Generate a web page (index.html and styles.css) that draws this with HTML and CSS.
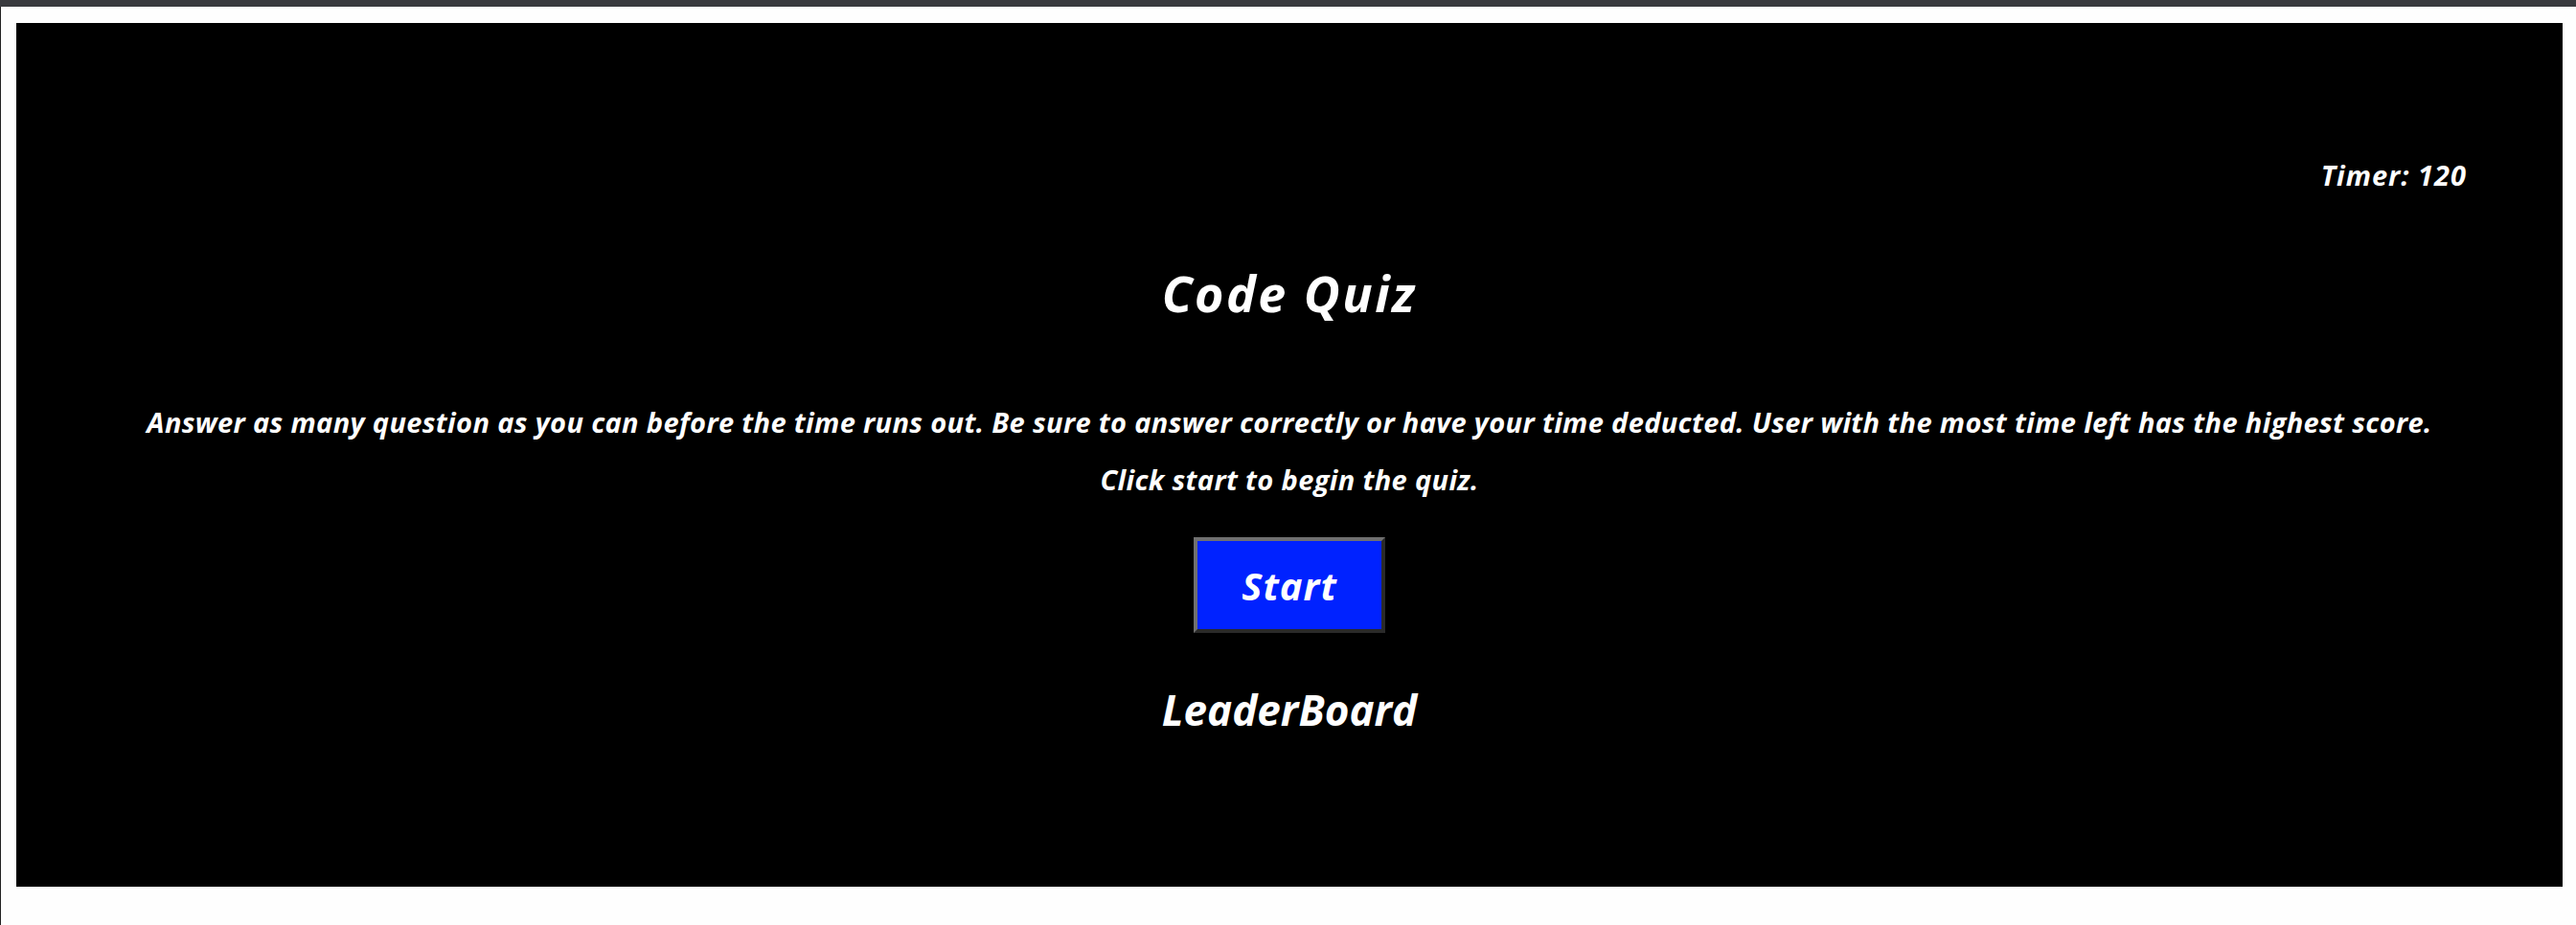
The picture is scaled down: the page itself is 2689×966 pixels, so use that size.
FILE: index.html
```html
<!DOCTYPE html>
<html lang="en">
<head>
<meta charset="utf-8">
<title>Code Quiz</title>
<link rel="stylesheet" href="styles.css">
</head>
<body>
<div class="chrome-bar"></div>
<div class="frame">
  <main class="quiz">
    <div class="timer-row"><span class="timer">Timer: 120</span></div>
    <h1 class="title">Code Quiz</h1>
    <p class="intro">Answer as many question as you can before the time runs out. Be sure to answer correctly or have your time deducted. User with the most time left has the highest score.<br>Click start to begin the quiz.</p>
    <button class="start-btn" type="button">Start</button>
    <h2 class="leaderboard">LeaderBoard</h2>
  </main>
</div>
</body>
</html>
```

FILE: styles.css
```css
html, body {
  margin: 0;
  padding: 0;
  background: #fefefe;
}

body {
  width: 2689px;
  height: 966px;
  overflow: hidden;
  font-family: "Open Sans", "DejaVu Sans", sans-serif;
  font-weight: 700;
  font-style: italic;
  color: #ffffff;
}

.chrome-bar {
  height: 7px;
  background: #393a3e;
}

.frame {
  height: 959px;
  box-sizing: border-box;
  border-left: 1px solid #222222;
  padding: 17px 14px 40px 16px;
  display: flex;
}

.quiz {
  flex: 1;
  background: #000000;
  display: flex;
  flex-direction: column;
  align-items: center;
}

.timer-row {
  align-self: stretch;
  display: flex;
  justify-content: flex-end;
  padding: 139px 100px 0 0;
}

.timer {
  font-size: 29px;
  line-height: 40px;
  letter-spacing: 1px;
}

.title {
  margin: 73px 0 0;
  font-size: 52px;
  line-height: 60px;
  font-weight: 700;
  letter-spacing: 2.5px;
}

.intro {
  margin: 75px 0 0;
  font-size: 29px;
  line-height: 60px;
  letter-spacing: 0.35px;
  text-align: center;
}

.start-btn {
  margin-top: 30px;
  width: 200px;
  height: 100px;
  box-sizing: border-box;
  background: #0022ff;
  border-style: solid;
  border-width: 4px;
  border-color: #707070 #2a2a2a #2a2a2a #707070;
  color: #ffffff;
  font-family: inherit;
  font-weight: 700;
  font-style: italic;
  font-size: 40px;
  letter-spacing: 1px;
  padding: 0;
}

.leaderboard {
  margin: 50px 0 0;
  font-size: 44px;
  line-height: 60px;
  font-weight: 700;
}
```
